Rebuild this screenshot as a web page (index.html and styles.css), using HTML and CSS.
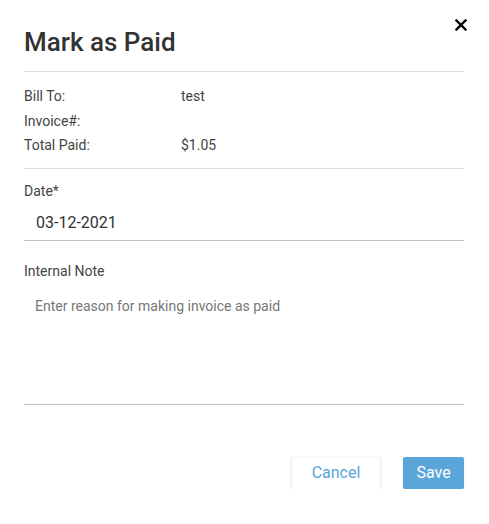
FILE: index.html
```html
<!DOCTYPE html>
<html lang="en">
<head>
<meta charset="utf-8">
<title>Mark as Paid</title>
<link rel="stylesheet" href="styles.css">
</head>
<body>
<div class="dialog">
  <button class="close" aria-label="Close">
    <svg width="12" height="12" viewBox="0 0 12 12"><path d="M1.5 1.5 L10.5 10.5 M10.5 1.5 L1.5 10.5" stroke="#000" stroke-width="2.4" stroke-linecap="square" fill="none"/></svg>
  </button>
  <h1 class="title">Mark as Paid</h1>
  <dl class="info">
    <dt>Bill To:</dt><dd>test</dd>
    <dt>Invoice#:</dt><dd></dd>
    <dt>Total Paid:</dt><dd>$1.05</dd>
  </dl>
  <div class="field date-field">
    <label class="label" for="date">Date*</label>
    <input class="input" id="date" type="text" value="03-12-2021" readonly>
  </div>
  <div class="field note-field">
    <label class="label" for="note">Internal Note</label>
    <textarea class="textarea" id="note" placeholder="Enter reason for making invoice as paid"></textarea>
  </div>
  <div class="actions">
    <button class="btn btn-cancel">Cancel</button>
    <button class="btn btn-save">Save</button>
  </div>
</div>
</body>
</html>
```

FILE: styles.css
```css
* { box-sizing: border-box; }
html, body { margin: 0; padding: 0; background: #fff; }
body { font-family: Roboto, "Liberation Sans", sans-serif; color: #333; }

.dialog {
  position: relative;
  width: 489px;
  padding: 0 25px 0 24px;
}

.close {
  position: absolute;
  top: 19px;
  right: 22px;
  width: 12px;
  height: 12px;
  padding: 0;
  border: 0;
  background: none;
  display: flex;
  cursor: pointer;
}

.title {
  margin: 0;
  padding: 28px 0 15px;
  font-size: 26px;
  line-height: 28px;
  font-weight: 500;
  color: #333;
  border-bottom: 1px solid #dcdcdc;
}

.info {
  margin: 0;
  padding: 12px 0 10px;
  display: grid;
  grid-template-columns: 157px 1fr;
  font-size: 14px;
  line-height: 24.5px;
  color: #444;
  border-bottom: 1px solid #dcdcdc;
}
.info dt, .info dd { margin: 0; min-height: 24.5px; }

.field { display: flex; flex-direction: column; }
.date-field { padding-top: 12px; }
.note-field { padding-top: 20px; }

.label {
  font-size: 14px;
  line-height: 20px;
  color: #444;
}

.input {
  font: inherit;
  font-size: 16px;
  line-height: 18px;
  color: #333;
  padding: 13px 12px 8px;
  border: 0;
  border-bottom: 1px solid #c4c4c4;
  outline: none;
  background: transparent;
}

.textarea {
  font: inherit;
  font-size: 14px;
  line-height: 20px;
  color: #333;
  height: 124px;
  padding: 15px 11px;
  border: 0;
  border-bottom: 1px solid #c4c4c4;
  outline: none;
  resize: none;
  background: transparent;
}
.textarea::placeholder { color: #777; opacity: 1; }

.actions {
  display: flex;
  justify-content: flex-end;
  gap: 23px;
  margin-top: 52px;
}

.btn {
  font: inherit;
  font-size: 16px;
  height: 32px;
  border: 0;
  border-radius: 2px;
  padding: 0;
  cursor: pointer;
}
.btn-cancel {
  width: 88px;
  background: #fff;
  color: #5aa5da;
  box-shadow: 0 1px 3px rgba(0,0,0,0.18), 0 0 1px rgba(0,0,0,0.06);
}
.btn-save {
  width: 61px;
  background: #5aa5da;
  color: #fff;
  box-shadow: 0 1px 2px rgba(0,0,0,0.12);
}
```
